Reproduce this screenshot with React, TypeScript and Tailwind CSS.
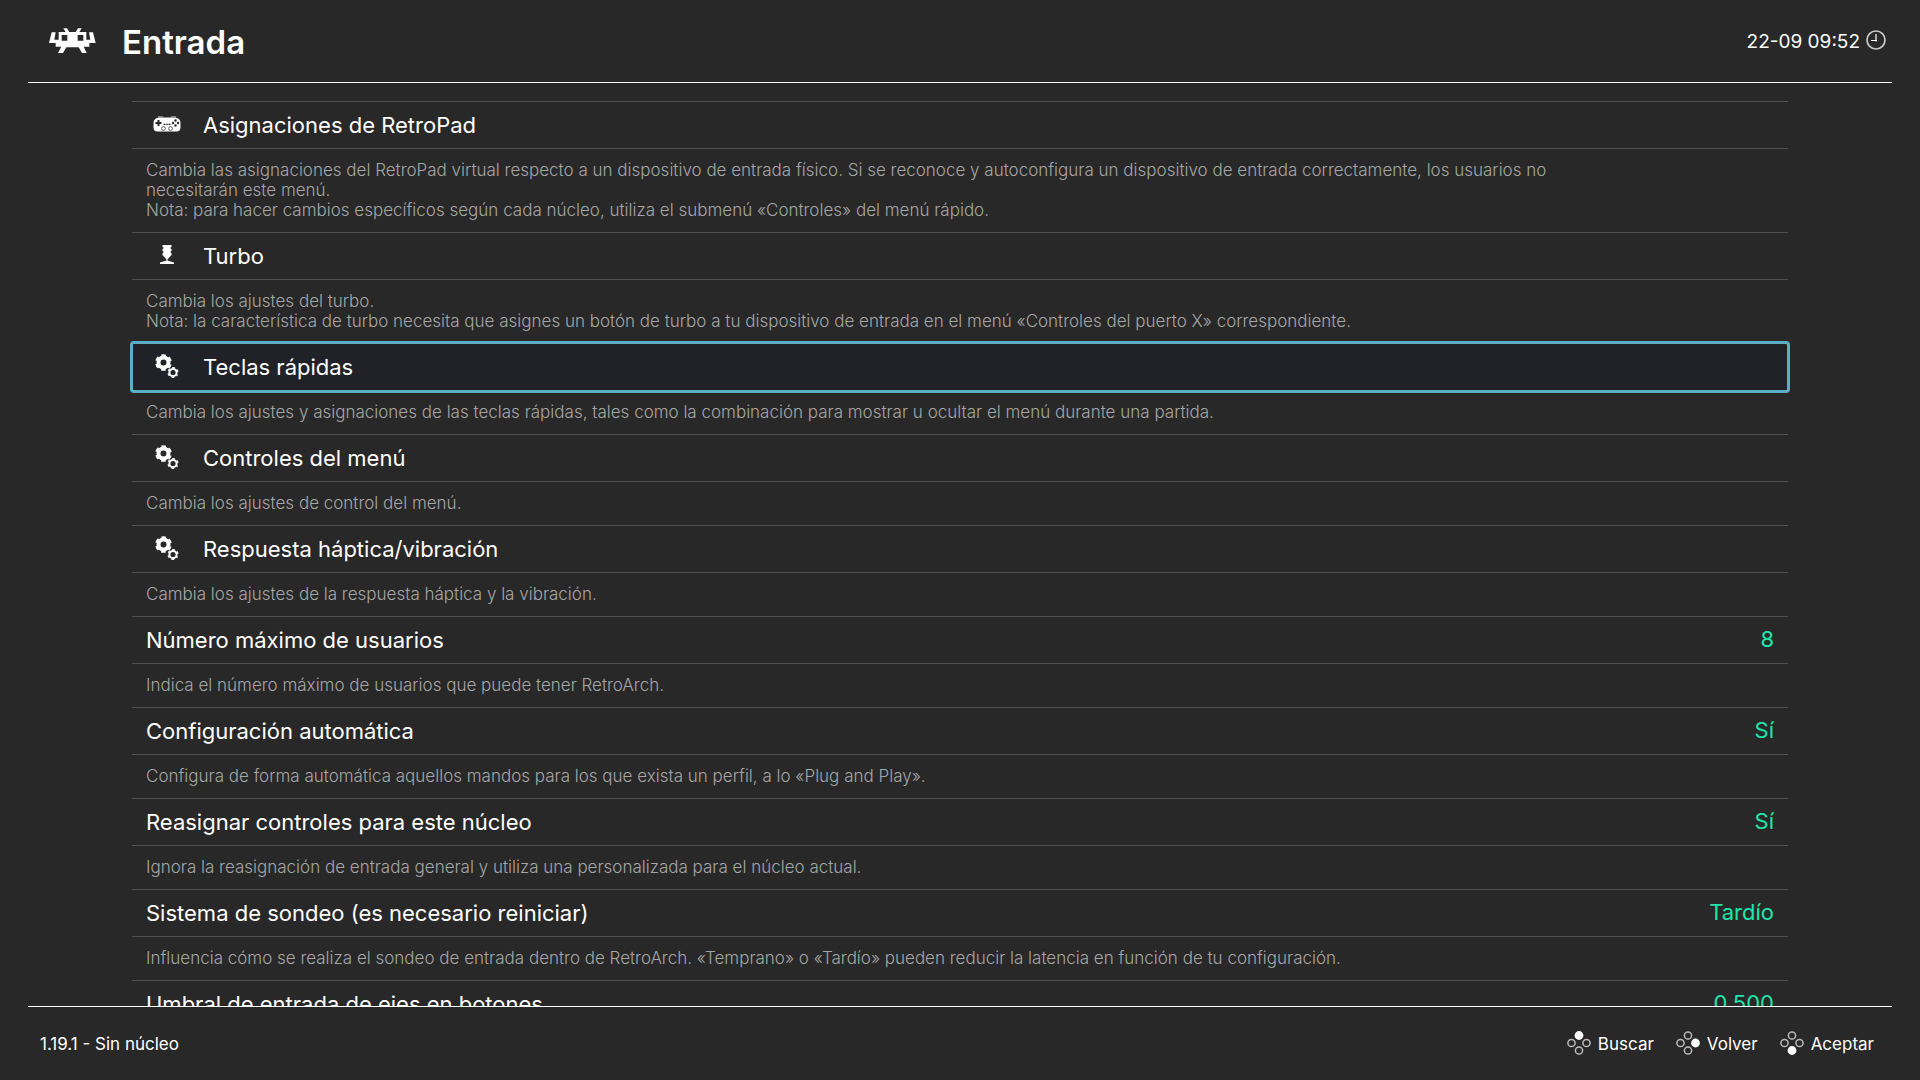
import { useState } from 'react'
import clsx from 'clsx'

type IconName = 'pad' | 'turbo' | 'gears'

interface Setting {
  label: string
  help: string[]
  icon?: IconName
  value?: string
}

const settings: Setting[] = [
  {
    label: 'Asignaciones de RetroPad',
    icon: 'pad',
    help: [
      'Cambia las asignaciones del RetroPad virtual respecto a un dispositivo de entrada físico. Si se reconoce y autoconfigura un dispositivo de entrada correctamente, los usuarios no necesitarán este menú.',
      'Nota: para hacer cambios específicos según cada núcleo, utiliza el submenú «Controles» del menú rápido.',
    ],
  },
  {
    label: 'Turbo',
    icon: 'turbo',
    help: [
      'Cambia los ajustes del turbo.',
      'Nota: la característica de turbo necesita que asignes un botón de turbo a tu dispositivo de entrada en el menú «Controles del puerto X» correspondiente.',
    ],
  },
  {
    label: 'Teclas rápidas',
    icon: 'gears',
    help: [
      'Cambia los ajustes y asignaciones de las teclas rápidas, tales como la combinación para mostrar u ocultar el menú durante una partida.',
    ],
  },
  {
    label: 'Controles del menú',
    icon: 'gears',
    help: ['Cambia los ajustes de control del menú.'],
  },
  {
    label: 'Respuesta háptica/vibración',
    icon: 'gears',
    help: ['Cambia los ajustes de la respuesta háptica y la vibración.'],
  },
  {
    label: 'Número máximo de usuarios',
    value: '8',
    help: ['Indica el número máximo de usuarios que puede tener RetroArch.'],
  },
  {
    label: 'Configuración automática',
    value: 'Sí',
    help: ['Configura de forma automática aquellos mandos para los que exista un perfil, a lo «Plug and Play».'],
  },
  {
    label: 'Reasignar controles para este núcleo',
    value: 'Sí',
    help: ['Ignora la reasignación de entrada general y utiliza una personalizada para el núcleo actual.'],
  },
  {
    label: 'Sistema de sondeo (es necesario reiniciar)',
    value: 'Tardío',
    help: [
      'Influencia cómo se realiza el sondeo de entrada dentro de RetroArch. «Temprano» o «Tardío» pueden reducir la latencia en función de tu configuración.',
    ],
  },
  {
    label: 'Umbral de entrada de ejes en botones',
    value: '0.500',
    help: [],
  },
]

function Logo() {
  return (
    <svg viewBox="0 0 141 75" className="mb-1 h-[25px] w-[47px]" fill="#fff" aria-hidden="true">
      <path
        fillRule="evenodd"
        d="M43 1H54L61 12H80L87 1H98L91 12H112V35H124L120 13H132L140 45H121V56H104L113 75H99L89 58H52L42 75H27L37 56H20V45H0L8 13H20L16 35H29V12H50zM38 21v17h17V21zM86 21v17h17V21z"
      />
    </svg>
  )
}

function ClockIcon() {
  return (
    <svg viewBox="0 0 20 20" className="size-5" fill="none" aria-hidden="true">
      <circle cx="10" cy="10" r="9" stroke="#c9c9c9" strokeWidth="1.7" />
      <path d="M10 4v7.5M5 10.5h6" stroke="#fff" strokeWidth="1.2" />
    </svg>
  )
}

function PadIcon() {
  return (
    <svg viewBox="0 0 28 16" className="h-4 w-7" aria-hidden="true">
      <path d="M5 .8h5M18 .8h5" stroke="#aaa" strokeWidth="1" />
      <path d="M6 1.500h16a5.500 5.500 0 0 1 5.500 5.500v4.500a4 4 0 0 1-4 4h-19a4 4 0 0 1-4-4V7A5.500 5.500 0 0 1 6 1.500z" fill="#fff" />
      <path d="M5.500 4v6M2.500 7h6" stroke="#282828" strokeWidth="2" />
      <g fill="#282828">
        <circle cx="22.500" cy="4.500" r="1.200" />
        <circle cx="22.500" cy="9.500" r="1.200" />
        <circle cx="20" cy="7" r="1.200" />
        <circle cx="25" cy="7" r="1.200" />
        <path d="M10.500 7.800h2v1.200h-2zM13.300 7.800h1.400v1.200h-1.400zM15.500 7.800h2v1.200h-2z" />
      </g>
      <circle cx="10.500" cy="12.500" r="1.900" fill="none" stroke="#555" strokeWidth=".9" />
      <circle cx="17.500" cy="12.500" r="1.900" fill="none" stroke="#555" strokeWidth=".9" />
    </svg>
  )
}

function TurboIcon() {
  return (
    <svg viewBox="0 0 14 20" className="h-5 w-3.5" fill="#fff" aria-hidden="true">
      <path d="M2.500 0h9v2l-1.500 1 1.500 1v2L10 7l1.500 1v2l-4 4.500v1l6.500 2V19H0v-1.500l6.500-2v-1l-4-4.500V8L4 7 2.500 6V4L4 3 2.500 2z" />
    </svg>
  )
}

function GearsIcon() {
  return (
    <svg viewBox="0 0 24 24" className="size-6" fill="none" stroke="#fff" aria-hidden="true">
      <circle cx="8.500" cy="8.500" r="5" strokeWidth="4" />
      <circle cx="8.500" cy="8.500" r="7.400" strokeWidth="1.800" strokeDasharray="4.500 3.249" strokeDashoffset="2.250" transform="rotate(30 8.500 8.500)" />
      <circle cx="18" cy="18.500" r="3.600" strokeWidth="2" />
      <circle cx="18" cy="18.500" r="5" strokeWidth="1.200" strokeDasharray="2.600 2.636" strokeDashoffset="1.300" transform="rotate(30 18 18.500)" />
    </svg>
  )
}

const icons = { pad: PadIcon, turbo: TurboIcon, gears: GearsIcon }

// Rombo de botones del mando, con uno relleno
function PadButtonIcon({ active }: { active: 'top' | 'right' | 'bottom' }) {
  const dots = [
    { id: 'top', cx: 12, cy: 4.5 },
    { id: 'right', cx: 19.5, cy: 12 },
    { id: 'bottom', cx: 12, cy: 19.5 },
    { id: 'left', cx: 4.5, cy: 12 },
  ]
  return (
    <svg viewBox="0 0 24 24" className="mb-0.5 size-6" aria-hidden="true">
      {dots.map((d) =>
        d.id === active ? (
          <circle key={d.id} cx={d.cx} cy={d.cy} r="4.4" fill="#fff" />
        ) : (
          <circle key={d.id} cx={d.cx} cy={d.cy} r="3.6" fill="none" stroke="#bbb" strokeWidth="1.5" />
        )
      )}
    </svg>
  )
}

function SettingRow({ setting, selected, onSelect }: { setting: Setting; selected: boolean; onSelect: () => void }) {
  const Icon = setting.icon && icons[setting.icon]

  return (
    <li>
      <button
        onClick={onSelect}
        className={clsx(
          'flex h-12 w-full items-center border-y px-3.5 text-left text-[22px] leading-7',
          selected
            ? 'rounded-xs border-transparent bg-[#212227] outline-3 -outline-offset-1 outline-[#5aafc5]'
            : 'border-[#505050]'
        )}
      >
        {Icon && (
          <span className="mr-5 flex w-[37px] justify-center pb-0.5 pl-1">
            <Icon />
          </span>
        )}
        <span className="grow">{setting.label}</span>
        {setting.value && <span className="pb-0.5 text-[#1ee6ac]">{setting.value}</span>}
      </button>
      <div className="-mb-px max-w-[1460px] px-3.5 pt-[11px] pb-[13px] text-[17px] leading-5 font-light text-[#a6a6a6]">
        {setting.help.map((line) => (
          <p key={line}>{line}</p>
        ))}
      </div>
    </li>
  )
}

export default function App() {
  const [selected, setSelected] = useState(2)

  return (
    <div className="flex h-screen flex-col bg-[#282828] px-7 font-['Inter',sans-serif] text-white">
      <header className="flex h-[83px] shrink-0 items-center border-b border-white pt-0.5 pr-1.5 pl-[21px]">
        <Logo />
        <h1 className="ml-[26px] text-[33px] leading-10 font-semibold">Entrada</h1>
        <time className="ml-auto text-[19px] leading-6">22-09 09:52</time>
        <span className="ml-1.5 pb-1">
          <ClockIcon />
        </span>
      </header>

      <main className="min-h-0 grow overflow-hidden px-26 pt-[18px]">
        <ul>
          {settings.map((setting, i) => (
            <SettingRow key={setting.label} setting={setting} selected={i === selected} onSelect={() => setSelected(i)} />
          ))}
        </ul>
      </main>

      <footer className="flex h-[74px] shrink-0 items-center justify-between border-t border-white pr-[18px] pl-3 text-[17px] leading-6">
        <p>1.19.1 - Sin núcleo</p>
        <div className="flex gap-[22px]">
          <button className="flex items-center gap-[7px]">
            <PadButtonIcon active="top" />
            Buscar
          </button>
          <button className="flex items-center gap-[7px]">
            <PadButtonIcon active="right" />
            Volver
          </button>
          <button className="flex items-center gap-[7px]">
            <PadButtonIcon active="bottom" />
            Aceptar
          </button>
        </div>
      </footer>
    </div>
  )
}
